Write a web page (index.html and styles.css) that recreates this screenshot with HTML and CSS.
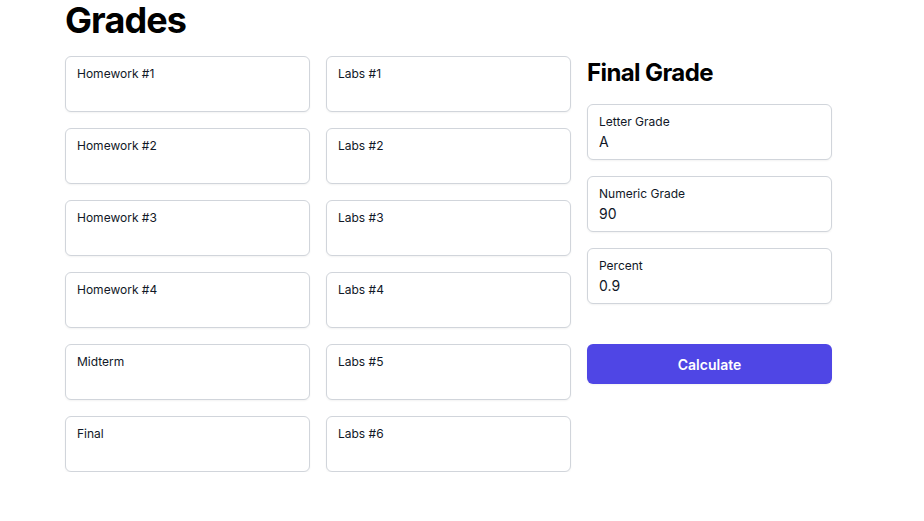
FILE: index.html
```html
<!DOCTYPE html>
<html>
<head>
<meta charset="utf-8">
<link rel="stylesheet" href="styles.css">
</head>
<body>
<div class="page">
  <h1 class="title">Grades</h1>
  <div class="layout">
    <div class="col">
      <div class="field"><label class="label">Homework #1</label><input class="input" type="text"></div>
      <div class="field"><label class="label">Homework #2</label><input class="input" type="text"></div>
      <div class="field"><label class="label">Homework #3</label><input class="input" type="text"></div>
      <div class="field"><label class="label">Homework #4</label><input class="input" type="text"></div>
      <div class="field"><label class="label">Midterm</label><input class="input" type="text"></div>
      <div class="field"><label class="label">Final</label><input class="input" type="text"></div>
    </div>
    <div class="col">
      <div class="field"><label class="label">Labs #1</label><input class="input" type="text"></div>
      <div class="field"><label class="label">Labs #2</label><input class="input" type="text"></div>
      <div class="field"><label class="label">Labs #3</label><input class="input" type="text"></div>
      <div class="field"><label class="label">Labs #4</label><input class="input" type="text"></div>
      <div class="field"><label class="label">Labs #5</label><input class="input" type="text"></div>
      <div class="field"><label class="label">Labs #6</label><input class="input" type="text"></div>
    </div>
    <div class="col">
      <h2 class="subtitle">Final Grade</h2>
      <div class="field"><label class="label">Letter Grade</label><input class="input" type="text" value="A"></div>
      <div class="field"><label class="label">Numeric Grade</label><input class="input" type="text" value="90"></div>
      <div class="field"><label class="label">Percent</label><input class="input" type="text" value="0.9"></div>
      <button class="btn" type="button">Calculate</button>
    </div>
  </div>
</div>
</body>
</html>
```

FILE: styles.css
```css
* { box-sizing: border-box; }
html, body { margin: 0; padding: 0; background: #ffffff; }
body {
  font-family: Inter, "Noto Sans", "Liberation Sans", sans-serif;
  color: #111827;
}
.page {
  width: 767px;
  margin-left: 65px;
}
.title {
  margin: 0;
  font-size: 36px;
  line-height: 40px;
  font-weight: 700;
  letter-spacing: -0.025em;
  color: #000;
}
.layout {
  margin-top: 16px;
  display: grid;
  grid-template-columns: repeat(3, 1fr);
  column-gap: 16px;
}
.col {
  display: flex;
  flex-direction: column;
  gap: 16px;
}
.subtitle {
  margin: 0;
  font-size: 24px;
  line-height: 32px;
  font-weight: 700;
  letter-spacing: -0.025em;
  color: #000;
  padding-top: 1px;
  margin-bottom: -1px;
}
.field {
  height: 56px;
  border: 1px solid #d1d5db;
  border-radius: 6px;
  padding: 9px 11px 5px;
  box-shadow: 0 1px 2px rgba(0,0,0,0.05);
  background: #fff;
}
.label {
  display: block;
  font-size: 12px;
  line-height: 16px;
  font-weight: 400;
  color: #111827;
}
.input {
  display: block;
  width: 100%;
  border: 0;
  padding: 0;
  margin: 0;
  outline: none;
  background: transparent;
  font-family: inherit;
  font-size: 14px;
  line-height: 24px;
  height: 24px;
  color: #111827;
}
.btn {
  margin-top: 24px;
  height: 40px;
  border: 0;
  border-radius: 6px;
  background: #4f46e5;
  color: #fff;
  font-family: inherit;
  font-size: 14px;
  font-weight: 600;
  box-shadow: 0 1px 2px rgba(0,0,0,0.05);
}
```
